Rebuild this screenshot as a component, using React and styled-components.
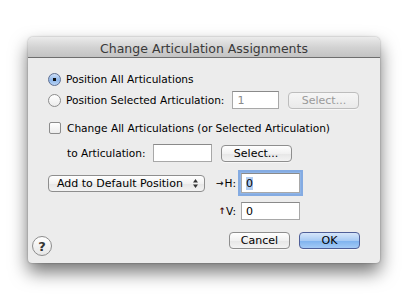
import React from "react";
import styled, { createGlobalStyle } from "styled-components";

const Global = createGlobalStyle`
  html, body {
    margin: 0;
    padding: 0;
    background: #ffffff;
  }
  body {
    font-family: "Lucida Grande", "DejaVu Sans", sans-serif;
    font-size: 10.6px;
    color: #000;
  }
`;

const Page = styled.div`
  width: 408px;
  height: 300px;
  padding: 37px 0 0 28px;
  box-sizing: border-box;
`;

const Dialog = styled.div`
  width: 352px;
  height: 226px;
  background: #ececec;
  border-radius: 5px 5px 4px 4px;
  box-shadow: 0 9px 18px rgba(0, 0, 0, 0.55), 0 0 2px rgba(0, 0, 0, 0.35);
  display: flex;
  flex-direction: column;
`;

const TitleBar = styled.div`
  height: 21px;
  flex: none;
  border-bottom: 1px solid #6e6e6e;
  border-radius: 5px 5px 0 0;
  background: linear-gradient(#ebebeb, #d3d3d3 50%, #c3c3c3);
  display: flex;
  align-items: center;
  justify-content: center;
  font-size: 12.5px;
  color: #3a3a3a;
  padding-top: 2px;
  box-sizing: border-box;
`;

const Body = styled.div`
  display: flex;
  flex-direction: column;
  padding: 0 20px;
`;

const Row = styled.div`
  display: flex;
  flex: none;
  align-items: center;
  height: ${(p) => p.h || 18}px;
  margin-top: ${(p) => p.top || 0}px;
  padding-left: ${(p) => p.indent || 0}px;
`;

const Radio = styled.span`
  width: 13px;
  height: 13px;
  border-radius: 50%;
  box-sizing: border-box;
  border: 1px solid ${(p) => (p.on ? "#5e6f92" : "#8c8c8c")};
  background: ${(p) =>
    p.on
      ? "radial-gradient(circle at 50% 50%, #111 0 1.6px, transparent 2px), linear-gradient(#cfe0f7, #8db6ea 55%, #b9d4f5)"
      : "linear-gradient(#ffffff, #ececec)"};
  margin-right: 5px;
  flex: none;
`;

const Check = styled.span`
  width: 12px;
  height: 12px;
  border-radius: 2px;
  box-sizing: border-box;
  border: 1px solid #8c8c8c;
  background: linear-gradient(#ffffff, #ececec);
  margin-right: 6px;
  margin-left: 1px;
  flex: none;
`;

const Label = styled.span`
  white-space: nowrap;
  color: ${(p) => (p.dim ? "#8a8a8a" : "#000")};
`;

const Field = styled.div`
  width: ${(p) => p.w || 47}px;
  height: ${(p) => p.h || 18}px;
  box-sizing: border-box;
  background: #fff;
  border: 1px solid #a8a8a8;
  border-top-color: #8a8a8a;
  margin-left: ${(p) => p.ml || 0}px;
  padding: ${(p) => (p.h === 20 ? "3px" : "2px")} 0 0 4px;
  font-size: 11px;
  color: ${(p) => (p.dim ? "#8a8a8a" : "#000")};
  flex: none;
  box-shadow: ${(p) =>
    p.focus ? "0 0 0 1px #8fb5e8, 0 0 0 3px rgba(88, 144, 222, 0.7)" : "none"};
`;

const Sel = styled.span`
  background: #b2cdf0;
`;

const Button = styled.div`
  width: ${(p) => p.w || 71}px;
  height: 17px;
  box-sizing: border-box;
  border-radius: 4px;
  margin-left: ${(p) => p.ml || 0}px;
  display: flex;
  align-items: center;
  justify-content: center;
  font-size: 11px;
  flex: none;
  color: ${(p) => (p.dim ? "#9a9a9a" : "#000")};
  border: 1px solid ${(p) => (p.primary ? "#4f5f98" : p.dim ? "#bdbdbd" : "#8e8e8e")};
  background: ${(p) =>
    p.primary
      ? "linear-gradient(#d6e6fa, #a9cbf4 50%, #7db1ee 51%, #a3caf6)"
      : p.dim
      ? "linear-gradient(#f6f6f6, #eaeaea)"
      : "linear-gradient(#ffffff, #f1f1f1 50%, #e6e6e6 51%, #f3f3f3)"};
  box-shadow: 0 1px 0 rgba(255, 255, 255, 0.6);
`;

const Popup = styled.div`
  width: 157px;
  height: 17px;
  box-sizing: border-box;
  border: 1px solid #8e8e8e;
  border-radius: 4px;
  background: linear-gradient(#ffffff, #f1f1f1 50%, #e6e6e6 51%, #f3f3f3);
  display: flex;
  align-items: center;
  justify-content: space-between;
  padding: 0 6px 0 8px;
  flex: none;
  font-size: 11px;
`;

const Offsets = styled.div`
  display: grid;
  grid-template-columns: 157px 36px 59px;
  grid-template-rows: 20px 18px;
  align-items: center;
  margin-top: 11px;
  row-gap: 9px;
  flex: none;
`;

const AxisLabel = styled.span`
  justify-self: end;
  padding-right: 5px;
  white-space: nowrap;
  display: flex;
  align-items: center;
`;

const Arrow = styled.span`
  font-size: 9px;
  color: ${(p) => p.c};
  margin-right: ${(p) => p.gap}px;
  font-weight: bold;
`;

const Footer = styled.div`
  display: flex;
  align-items: flex-start;
  height: 31px;
  margin-top: 12px;
  padding: 0 20px 0 4px;
  flex: none;
`;

const Help = styled.div`
  width: 20px;
  height: 20px;
  box-sizing: border-box;
  border-radius: 50%;
  border: 1px solid #8c8c8c;
  background: linear-gradient(#ffffff, #e6e6e6);
  display: flex;
  align-items: center;
  justify-content: center;
  font-size: 13px;
  font-weight: bold;
  color: #333;
  margin-top: 4px;
`;

const Spacer = styled.div`
  flex: 1;
`;

const Updown = () => (
  <svg width="5" height="9" viewBox="0 0 5 9">
    <path d="M2.5 0 L5 3.5 H0 Z" fill="#333" />
    <path d="M2.5 9 L5 5.5 H0 Z" fill="#333" />
  </svg>
);

export default function App() {
  return (
    <>
      <Global />
      <Page>
        <Dialog>
          <TitleBar>Change Articulation Assignments</TitleBar>
          <Body>
            <Row top={13} h={16}>
              <Radio on />
              <Label>Position All Articulations</Label>
            </Row>
            <Row top={4}>
              <Radio />
              <Label>Position Selected Articulation:</Label>
              <Field ml={8} dim>1</Field>
              <Button ml={9} dim>Select...</Button>
            </Row>
            <Row top={11} h={16}>
              <Check />
              <Label>Change All Articulations (or Selected Articulation)</Label>
            </Row>
            <Row top={8} indent={19}>
              <Label>to Articulation:</Label>
              <Field ml={7} w={59}></Field>
              <Button ml={9}>Select...</Button>
            </Row>
            <Offsets>
              <Popup>
                <Label>Add to Default Position</Label>
                <Updown />
              </Popup>
              <AxisLabel>
                <Arrow c="#222" gap={1}>→</Arrow>H:
              </AxisLabel>
              <Field w={59} h={20} focus>
                <Sel>0</Sel>
              </Field>
              <span />
              <AxisLabel>
                <Arrow c="#4a1010" gap={0}>↑</Arrow>V:
              </AxisLabel>
              <Field w={59}>0</Field>
            </Offsets>
          </Body>
          <Footer>
            <Help>?</Help>
            <Spacer />
            <Button w={61}>Cancel</Button>
            <Button w={61} ml={9} primary>
              OK
            </Button>
          </Footer>
        </Dialog>
      </Page>
    </>
  );
}
